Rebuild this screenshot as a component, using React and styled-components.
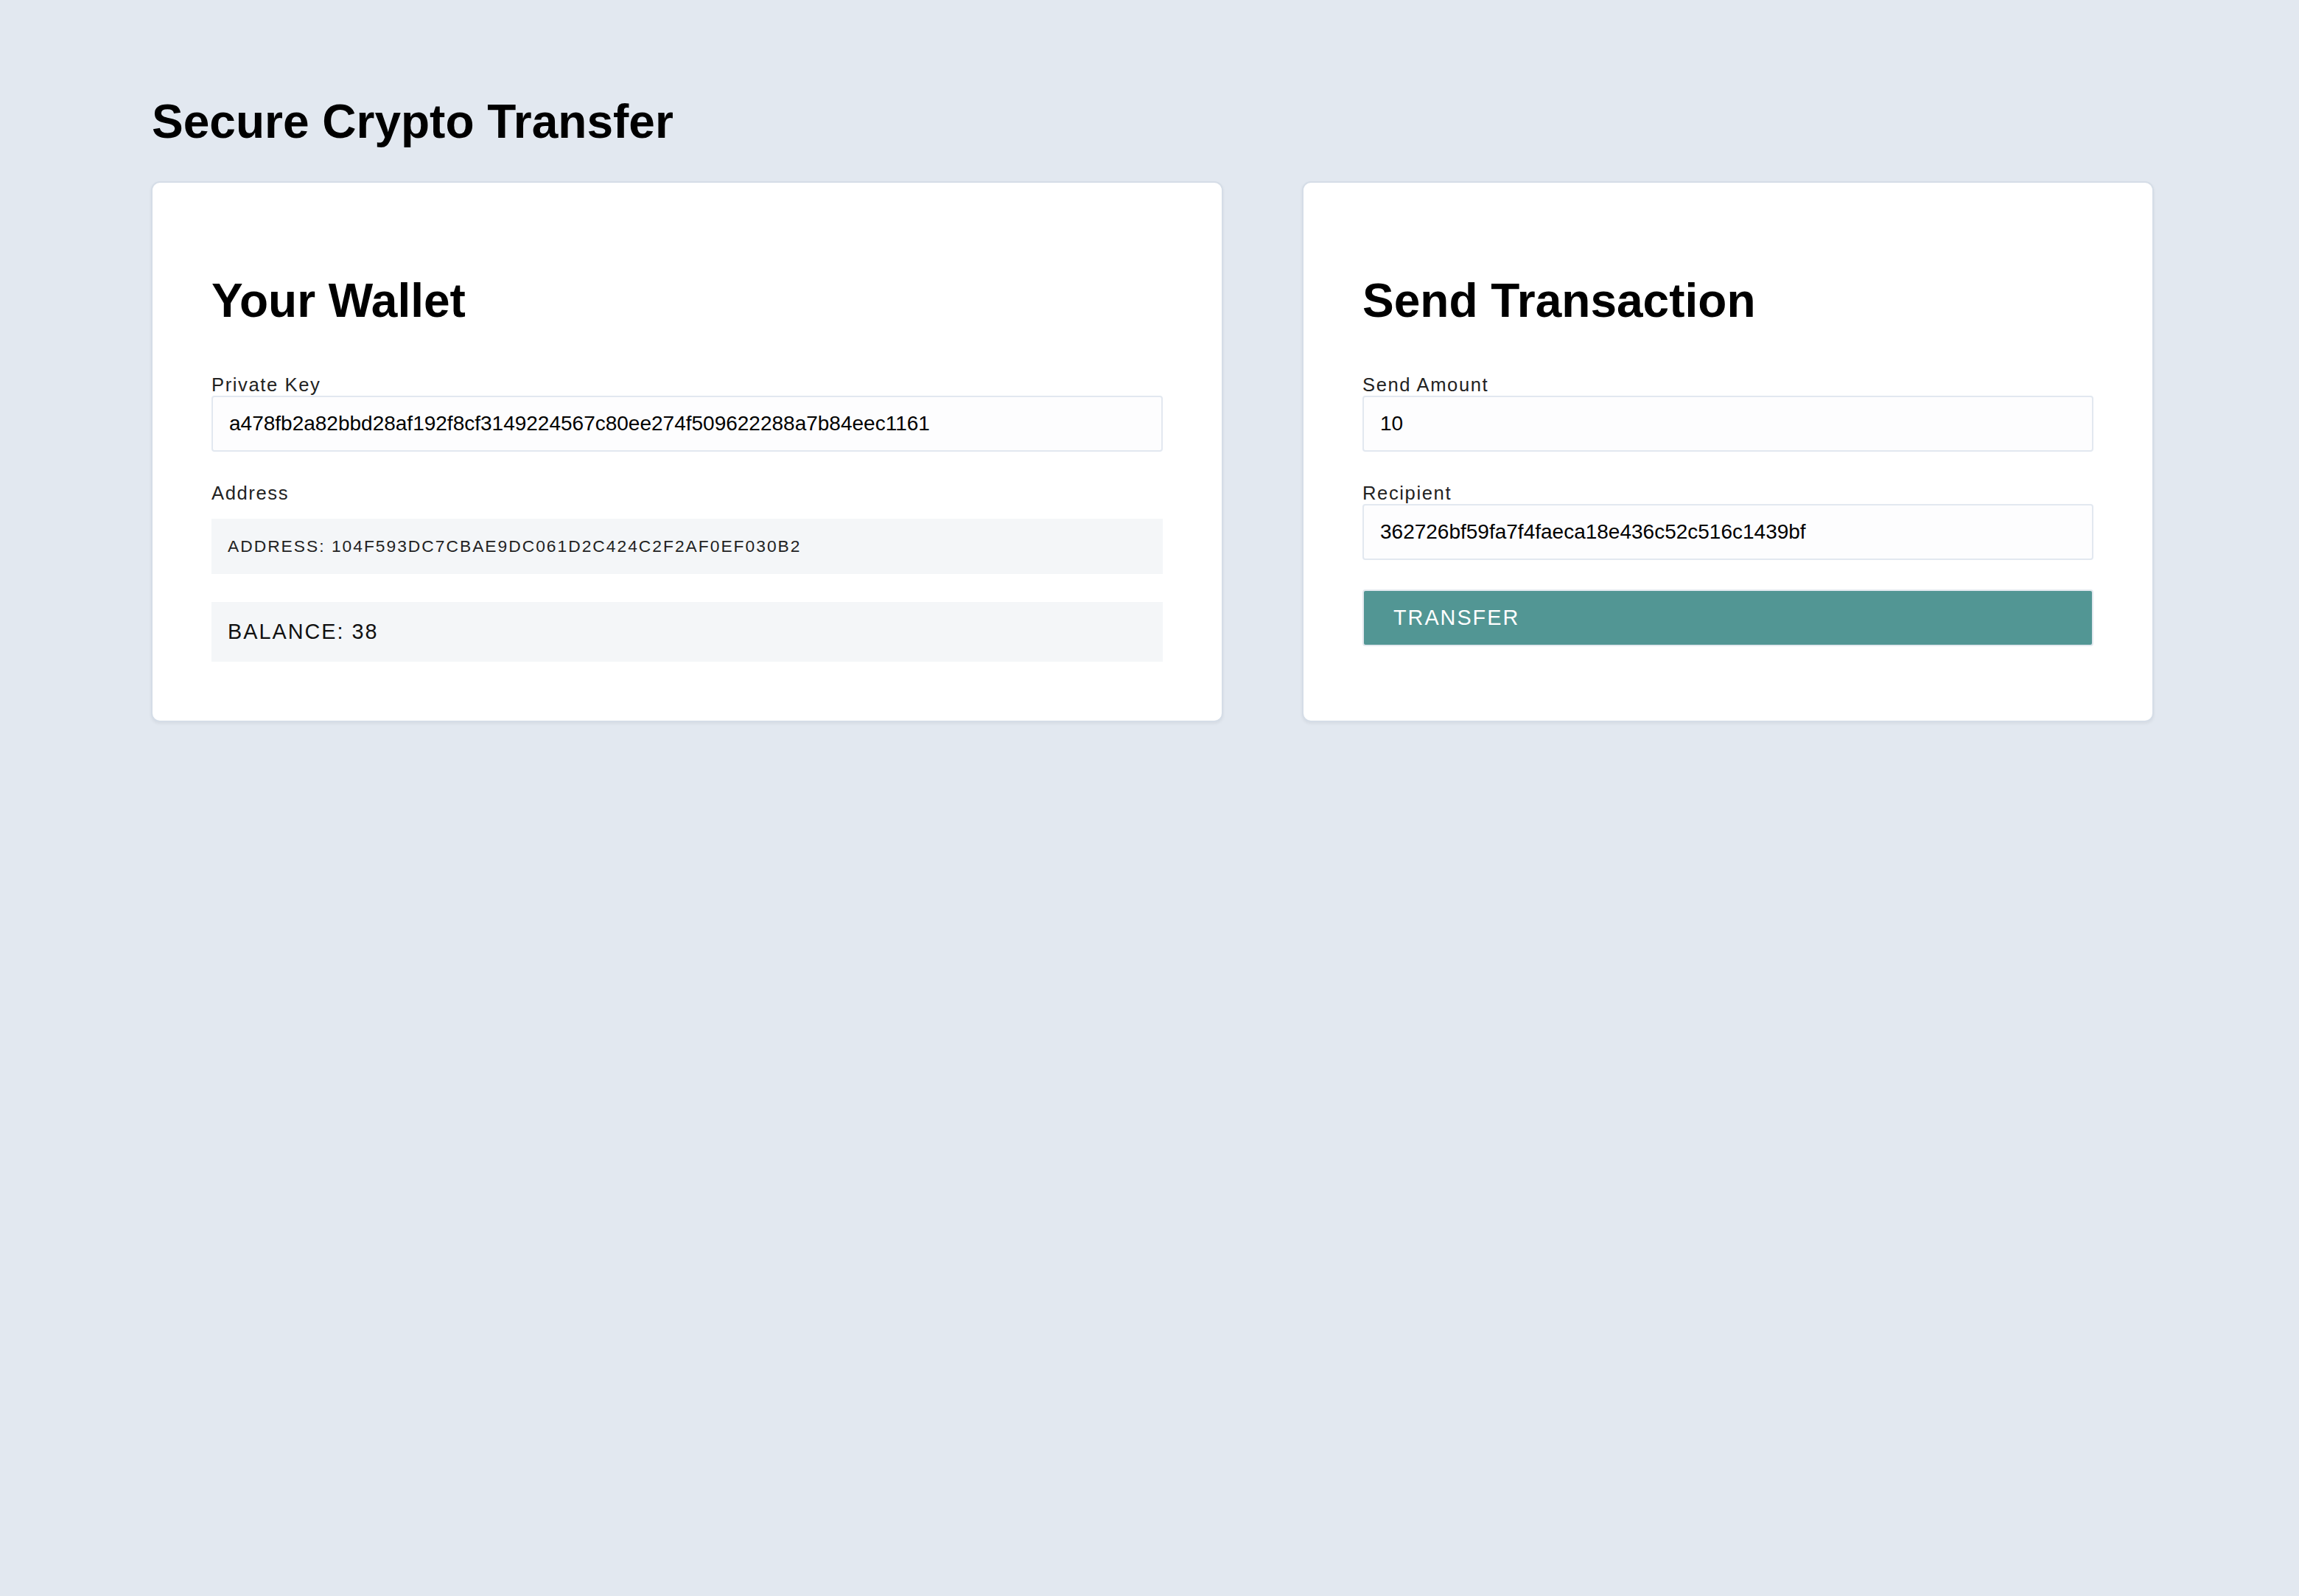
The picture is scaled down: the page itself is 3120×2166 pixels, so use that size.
import React from "react";
import styled, { createGlobalStyle } from "styled-components";

const GlobalStyle = createGlobalStyle`
  html, body {
    margin: 0;
    padding: 0;
    background: #e2e8f0;
  }
  body {
    font-family: "Liberation Sans", Arial, Helvetica, sans-serif;
    color: #000;
    min-height: 2166px;
  }
  * { box-sizing: border-box; }
`;

const Page = styled.div`
  padding: 128px 197px 0 205px;
`;

const Title = styled.h1`
  margin: 0 0 44px 1px;
  font-size: 64px;
  font-weight: 700;
  line-height: normal;
`;

const Row = styled.div`
  display: flex;
  align-items: stretch;
  gap: 107px;
`;

const Card = styled.section`
  width: ${(p) => p.$w}px;
  flex: 0 0 auto;
  display: flex;
  flex-direction: column;
  align-items: stretch;
  background: #fff;
  border: 2px solid #d5dde7;
  border-radius: 12px;
  box-shadow: 0 2px 4px rgba(0, 0, 0, 0.06);
  padding: 80px;
`;

const CardTitle = styled.h1`
  margin: 43px 0;
  font-size: 64px;
  font-weight: 700;
  line-height: normal;
`;

const Field = styled.label`
  display: flex;
  flex-direction: column;
  margin: ${(p) => (p.$bare ? "20px 0 0" : "20px 0 22px")};
  font-size: 25.6px;
  letter-spacing: 1.6px;
  color: #222;
  line-height: normal;
`;

const Input = styled.input`
  font-family: "Liberation Sans", Arial, sans-serif;
  font-size: 28px;
  color: #000;
  letter-spacing: 0;
  background: #fdfdfe;
  border: 2px solid #e2e8f0;
  border-radius: 4px;
  padding: 20px 0 20px 22px;
  line-height: normal;
  outline: none;
`;

const InfoBox = styled.div`
  margin: ${(p) => (p.$last ? "20px 0 0" : "20px 0 18px")};
  padding: 24px 22px;
  background: #f4f6f8;
  text-transform: uppercase;
  letter-spacing: 2px;
  font-size: ${(p) => (p.$small ? "22.8px" : "28.8px")};
  color: ${(p) => (p.$small ? "#222" : "#111")};
  line-height: normal;
`;

const Button = styled.button`
  margin-top: 18px;
  display: flex;
  align-items: center;
  font-family: "Liberation Sans", Arial, sans-serif;
  font-size: 28.8px;
  letter-spacing: 2px;
  text-transform: uppercase;
  color: #fff;
  background: #529694;
  border: 2px solid #e3e9ef;
  border-radius: 4px;
  padding: 20px 40px;
  line-height: normal;
  cursor: pointer;
`;

export default function App() {
  return (
    <>
      <GlobalStyle />
      <Page>
        <Title>Secure Crypto Transfer</Title>
        <Row>
          <Card $w={1455}>
            <CardTitle>Your Wallet</CardTitle>
            <Field>
              Private Key
              <Input
                readOnly
                value="a478fb2a82bbd28af192f8cf3149224567c80ee274f509622288a7b84eec1161"
              />
            </Field>
            <Field $bare>Address</Field>
            <InfoBox $small>Address: 104F593DC7CBAE9DC061D2C424C2F2AF0EF030B2</InfoBox>
            <InfoBox $last>Balance: 38</InfoBox>
          </Card>
          <Card $w={1156}>
            <CardTitle>Send Transaction</CardTitle>
            <Field>
              Send Amount
              <Input readOnly value="10" />
            </Field>
            <Field>
              Recipient
              <Input readOnly value="362726bf59fa7f4faeca18e436c52c516c1439bf" />
            </Field>
            <div>
              <Button as="div">Transfer</Button>
            </div>
          </Card>
        </Row>
      </Page>
    </>
  );
}
